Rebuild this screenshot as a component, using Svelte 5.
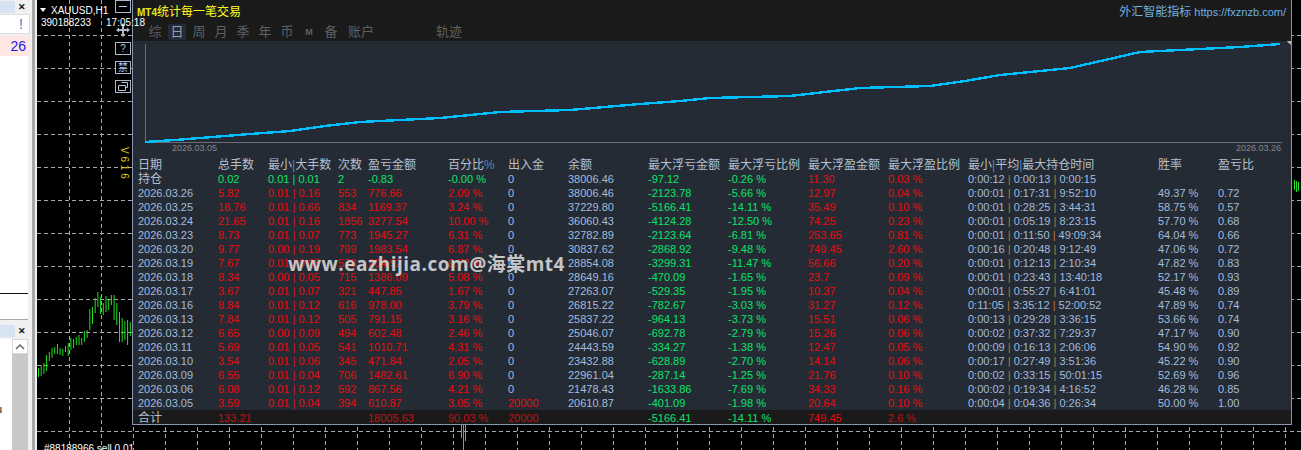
<script>
  const rows = `2026.03.26,5.82,0.01|0.16,553,776.66,2.09 %,0,38006.46,-2123.78,-5.66 %,12.97,0.04 %,0:00:01|0:17:31|9:52:10,49.37 %,0.72
2026.03.25,18.76,0.01|0.66,834,1169.37,3.24 %,0,37229.80,-5166.41,-14.11 %,35.49,0.10 %,0:00:01|0:28:25|3:44:31,58.75 %,0.57
2026.03.24,21.65,0.01|0.16,1856,3277.54,10.00 %,0,36060.43,-4124.28,-12.50 %,74.25,0.23 %,0:00:01|0:05:19|8:23:15,57.70 %,0.68
2026.03.23,8.73,0.01|0.07,773,1945.27,6.31 %,0,32782.89,-2123.64,-6.81 %,253.65,0.81 %,0:00:01|0:11:50|49:09:34,64.04 %,0.66
2026.03.20,9.77,0.00|0.19,799,1983.54,6.87 %,0,30837.62,-2868.92,-9.48 %,749.45,2.60 %,0:00:16|0:20:48|9:12:49,47.06 %,0.72
2026.03.19,7.67,0.01|0.05,573,204.92,0.72 %,0,28854.08,-3299.31,-11.47 %,56.66,0.20 %,0:00:01|0:12:13|2:10:34,47.82 %,0.83
2026.03.18,8.34,0.00|0.05,715,1386.09,5.08 %,0,28649.16,-470.09,-1.65 %,23.7,0.09 %,0:00:01|0:23:43|13:40:18,52.17 %,0.93
2026.03.17,3.67,0.01|0.07,321,447.85,1.67 %,0,27263.07,-529.35,-1.95 %,10.37,0.04 %,0:00:01|0:55:27|6:41:01,45.48 %,0.89
2026.03.16,8.84,0.01|0.12,616,978.00,3.79 %,0,26815.22,-782.67,-3.03 %,31.27,0.12 %,0:11:05|3:35:12|52:00:52,47.89 %,0.74
2026.03.13,7.84,0.01|0.12,505,791.15,3.16 %,0,25837.22,-964.13,-3.73 %,15.51,0.06 %,0:00:13|0:29:28|3:36:15,53.66 %,0.74
2026.03.12,6.65,0.00|0.09,494,602.48,2.46 %,0,25046.07,-692.78,-2.79 %,15.26,0.06 %,0:00:02|0:37:32|7:29:37,47.17 %,0.90
2026.03.11,5.69,0.01|0.05,541,1010.71,4.31 %,0,24443.59,-334.27,-1.38 %,12.47,0.05 %,0:00:09|0:16:13|2:06:06,54.90 %,0.92
2026.03.10,3.54,0.01|0.06,345,471.84,2.05 %,0,23432.88,-628.89,-2.70 %,14.14,0.06 %,0:00:17|0:27:49|3:51:36,45.22 %,0.90
2026.03.09,6.55,0.01|0.04,706,1482.61,6.90 %,0,22961.04,-287.14,-1.25 %,21.76,0.10 %,0:00:02|0:33:15|50:01:15,52.69 %,0.96
2026.03.06,6.08,0.01|0.12,592,867.56,4.21 %,0,21478.43,-1633.86,-7.69 %,34.33,0.16 %,0:00:02|0:19:34|4:16:52,46.28 %,0.85
2026.03.05,3.59,0.01|0.04,394,610.87,3.05 %,20000,20610.87,-401.09,-1.98 %,20.64,0.10 %,0:00:04|0:04:36|0:26:34,50.00 %,1.00`
    .split('\n').map((l) => l.split(','));

  const hold = ['持仓','0.02','0.01|0.01','2','-0.83','-0.00 %','0','38006.46','-97.12','-0.26 %','11.30','0.03 %','0:00:12|0:00:13|0:00:15','',''];
  const total = ['合计','133.21','','','18005.63','90.03 %','20000','','-5166.41','-14.11 %','749.45','2.6 %','','',''];

  // colour class per column for a daily row
  const tone = ['info','red','red','red','red','red','info','info','green','green','red','red','info','info','info'];
  const holdTone = ['head','green','green','green','green','green','info','info','green','green','red','red','info','info','info'];
  const totalTone = ['head','dim','dim','dim','dim','dim','dim','info','green','green','red','dim','info','info','info'];

  const tabs = ['综','日','周','月','季','年','币','M','备','账户','轨迹'];

  const hLines = [35,68,101,134,167,200,233,266,299,332,365,398,431];
  const vLines = Array.from({ length: 39 }, (_, i) => 69 + i * 32);

  const linePts = '145,142 175,140 200,138 250,134 290,131 325,126 360,122 400,120 440,118 470,115 500,112 570,110 640,104 680,101 710,98 790,96 825,92 860,88 930,86 965,81 1000,75 1070,68 1105,60 1140,52 1200,49 1240,47 1280,44';

  const candles = [[368,377],[365,376],[363,374],[355,371],[352,361],[348,358],[347,354],[344,354],[348,355],[349,356],[346,352],[343,356],[338,350],[339,348],[337,345],[335,345],[338,345],[331,342],[330,338],[309,330],[307,324],[298,313],[292,307],[297,314],[303,315],[296,312],[300,310],[295,305],[295,320],[303,325],[312,342],[318,342],[321,340],[320,345],[322,336]];

  const sep = ' | ';
</script>

{#snippet cell(text, cls, pipe)}
  <span class={cls}>
    {#if text.includes('|')}
      {#each text.split('|') as part, i}{#if i > 0}<span class={pipe}>{sep}</span>{/if}{part}{/each}
    {:else}{text}{/if}
  </span>
{/snippet}

<div class="screen">
  <aside class="side">
    <div class="side-inner">
      <div class="tabbar"><span class="tabtitle"></span><span class="close">✕</span></div>
      <div class="alert"><span class="bang">!</span></div>
      <div class="count">26</div>
      <div class="blank"><div class="rule"></div></div>
      <div class="tabbar second"><span class="tabtitle"></span><span class="close">✕</span></div>
      <div class="list">
        <span class="clip">u</span>
        <div class="scroll">
          <div class="up">
            <svg width="14" height="14" viewBox="0 0 14 14"><path d="M3 9 L7 5 L11 9" fill="none" stroke="#666" stroke-width="1.5" /></svg>
          </div>
          <div class="track"></div>
        </div>
      </div>
    </div>
  </aside>

  <svg class="plot" width="1301" height="450" viewBox="0 0 1301 450">
    {#each hLines as y}
      <line x1="37" x2="1301" y1={y + 0.5} y2={y + 0.5} stroke="#a4a8ae" stroke-dasharray="4 3" />
    {/each}
    {#each vLines as x}
      <line x1={x + 0.5} x2={x + 0.5} y1="0" y2="450" stroke="#a4a8ae" stroke-dasharray="4 3" />
    {/each}
    {#each candles as c, i}
      <line x1={38.5 + i * 2.7} x2={38.5 + i * 2.7} y1={c[0]} y2={c[1]} stroke="#22e022" />
    {/each}
    <g stroke="#22e022">
      <line x1="461.5" x2="461.5" y1="425" y2="438" />
      <line x1="465.5" x2="465.5" y1="425" y2="441" />
      <line x1="463.5" x2="463.5" y1="425" y2="450" />
      <line x1="1294.5" x2="1294.5" y1="180" y2="190" />
      <line x1="1296.5" x2="1296.5" y1="181" y2="192" />
      <line x1="1298.5" x2="1298.5" y1="182" y2="191" />
    </g>
  </svg>

  <div class="order">#88188966 sell 0.01</div>
  <div class="version">V 6 1 6</div>

  <div class="tools">
    <button class="tool" aria-label="minimize"><svg width="16" height="13" viewBox="0 0 16 13"><path d="M4 6.5h8" stroke="#b8c8dc" /></svg></button>
    <svg class="move" width="16" height="16" viewBox="0 0 16 16"><path d="M8 1 L10.5 4 H9 V7 H12 V5.5 L15 8 L12 10.5 V9 H9 V12 H10.5 L8 15 L5.5 12 H7 V9 H4 V10.5 L1 8 L4 5.5 V7 H7 V4 H5.5 Z" fill="#aeb8c4" /></svg>
    <button class="tool text">?</button>
    <button class="tool text">禁</button>
    <button class="tool" aria-label="restore"><svg width="16" height="13" viewBox="0 0 16 13"><path d="M6.5 2.5h6v5h-2M3.5 5.5h7v5h-7z" fill="none" stroke="#b8c8dc" /></svg></button>
  </div>

  <section class="panel">
    <header class="head-block">
      <div class="title-row">
        <span class="title"><b>MT4</b>统计每一笔交易</span>
        <span class="brand">外汇智能指标<a href="#top">https://fxznzb.com/</a></span>
      </div>
      <nav class="tabs">
        {#each tabs as t, i}
          <span class="tab" class:active={i === 1} class:m={t === 'M'} class:wide={t.length > 1} class:far={i === 10}>{t}</span>
        {/each}
      </nav>
    </header>

    <svg class="curve" width="1158" height="117" viewBox="133 41 1158 117">
      <path d="M145.5 44V142.5H1282" fill="none" stroke="#6b7078" />
      <polyline points={linePts} fill="none" stroke="#00bfff" stroke-width="2.4" shape-rendering="crispEdges" />
      <text x="172" y="151">2026.03.05</text>
      <text x="1236" y="151">2026.03.26</text>
      <path d="M1291 38v7l-4-3.5z" fill="#b8b8b8" />
    </svg>

    <div class="table">
      <div class="row heading">
        <span>日期</span><span>总手数</span><span>最小<i>|</i>大手数</span><span>次数</span><span>盈亏金额</span><span>百分比<i>%</i></span><span>出入金</span><span>余额</span><span>最大浮亏金额</span><span>最大浮亏比例</span><span>最大浮盈金额</span><span>最大浮盈比例</span><span>最小<i>|</i>平均<i>|</i>最大持仓时间</span><span>胜率</span><span>盈亏比</span>
      </div>
      <div class="row">
        {#each hold as v, i}{@render cell(v, holdTone[i], i === 12 ? 'amber' : '')}{/each}
      </div>
      {#each rows as r}
        <div class="row">
          {#each r as v, i}{@render cell(v, i === 6 && v !== '0' ? 'red' : tone[i], i === 12 ? 'amber' : '')}{/each}
        </div>
      {/each}
      <div class="row foot">
        {#each total as v, i}{@render cell(v, totalTone[i], '')}{/each}
      </div>
    </div>
  </section>

  <div class="chart-labels">
    <div class="symbol"><span class="tri"></span>XAUUSD,H1</div>
    <div class="acct"><span>390188233</span><span>17:05:18</span></div>
  </div>

  <div class="mark">www.eazhijia.com@海棠mt4</div>
</div>

<style>
  :global(body) { margin: 0; background: #000; }
  .screen {
    position: relative;
    width: 1301px;
    height: 450px;
    overflow: hidden;
    background: #000;
    font-family: "Liberation Sans", "Noto Sans CJK SC", sans-serif;
    font-size: 11px;
  }

  /* left dock */
  .side { position: absolute; left: 0; top: 0; width: 37px; height: 450px; background: #f0f0f0; box-sizing: border-box; }
  .side::after { content: ""; position: absolute; left: 32px; top: 0; width: 3px; height: 100%; background: #a8a8a8; }
  .side-inner { display: flex; flex-direction: column; width: 30px; height: 100%; }
  .tabbar { height: 14px; display: flex; align-items: center; flex: none; }
  .tabtitle { width: 15px; height: 12px; background: #d6e4f2; }
  .close { margin-left: 3px; font-size: 9px; font-weight: bold; color: #111; }
  .alert { height: 20px; background: #fff; border: 1px solid #dcdcdc; border-left: 0; box-sizing: border-box; display: flex; justify-content: flex-end; padding-right: 6px; align-items: center; }
  .bang { color: #2d7fd8; font-size: 14px; }
  .count { height: 20px; margin-top: 2px; background: #ffe6e2; color: #1a1ae0; font-size: 14px; display: flex; align-items: center; justify-content: flex-end; padding-right: 4px; }
  .blank { flex: 1; background: #fff; padding-top: 237px; box-sizing: border-box; width: 28px; border-bottom: 1px solid #a8a8a8; }
  .rule { height: 1px; background: #111; }
  .second { height: 19px; background: #f0f0f0; padding-top: 2px; box-sizing: border-box; }
  .list { height: 111px; background: #fff; position: relative; width: 28px; flex: none; display: flex; justify-content: flex-end; }
  .clip { position: absolute; left: -4px; top: 64px; color: #112; font-size: 11px; }
  .scroll { width: 16px; display: flex; flex-direction: column; }
  .up { height: 15px; display: flex; justify-content: center; align-items: center; background: #fff; border: 1px solid #d8d8d8; box-sizing: border-box; }
  .track { flex: 1; background: #c8c8c8; }

  /* chart canvas */
  .plot { position: absolute; left: 0; top: 0; clip-path: inset(0 0 0 37px); }
  .chart-labels { position: absolute; left: 40px; top: 2px; color: #fff; font-size: 10px; }
  .symbol { display: flex; align-items: center; gap: 5px; height: 14px; padding-top: 1px; box-sizing: content-box; }
  .tri { width: 0; height: 0; border-left: 3.5px solid transparent; border-right: 3.5px solid transparent; border-top: 4px solid #fff; }
  .acct { display: flex; gap: 15px; padding-left: 1px; }
  .order { position: absolute; left: 44px; top: 443px; color: #fff; font-size: 10px; }
  .version { position: absolute; left: 119px; top: 147px; color: #d8c818; font-size: 10px; writing-mode: vertical-rl; }

  .tools { position: absolute; left: 115px; top: 0; width: 16px; display: flex; flex-direction: column; align-items: center; }
  .tool { width: 16px; height: 13px; padding: 0; margin: 0 0 6px; box-sizing: border-box; background: #000; border: 1px solid #aab8cc; color: #b8c8dc; font: 10px/11px "Liberation Sans", "Noto Sans CJK SC", sans-serif; display: flex; align-items: center; justify-content: center; overflow: hidden; }
  .tool svg { flex: none; }
  .move { margin: 3px 0 4px; }

  /* stats window */
  .panel { position: absolute; left: 132px; top: 0; width: 1160px; height: 425px; box-sizing: border-box; border: 1px solid #8796ae; border-top: 0; background: #252b35; display: flex; flex-direction: column; }
  .head-block { height: 41px; background: #1a1a1a; flex: none; box-sizing: border-box; padding-top: 1px; }
  .title-row { display: flex; justify-content: space-between; height: 18px; align-items: center; padding: 0 5px 0 4px; }
  .title { color: #ffff22; font-size: 12px; }
  .title b { color: #e8e818; font-weight: bold; font-size: 10px; }
  .brand { color: #6fb2e0; font-size: 12px; }
  .brand a { color: #6fb2e0; font-size: 11px; margin-left: 3px; text-decoration: none; }
  .tabs { display: flex; margin-top: 4px; padding-left: 11px; height: 17px; align-items: center; color: #5e6064; font-size: 13px; }
  .tab { width: 18px; margin: 0 2px; height: 16px; line-height: 16px; text-align: center; flex: none; box-sizing: border-box; }
  .tab.active { background: #252b35; border-radius: 2px; color: #96a2b4; }
  .tab.m { font-size: 9px; font-weight: bold; }
  .tab.wide { width: 28px; margin-left: 5px; }
  .tab.far { margin-left: 58px; }

  .curve { display: block; flex: none; }
  .curve text { font: 9px "Liberation Sans", sans-serif; fill: #84888f; }

  .table { display: flex; flex-direction: column; flex: 1; }
  .row {
    display: grid;
    grid-template-columns: 80px 50px 70px 30px 80px 60px 60px 80px 80px 80px 80px 80px 190px 60px 1fr;
    height: 14px;
    line-height: 14px;
    padding-left: 5px;
    white-space: pre;
    flex: none;
  }
  .row > span { overflow: visible; }
  .heading { color: #b6c0cc; font-size: 12px; }
  .heading i { font-style: normal; color: #4a86c8; }
  .head { color: #b6c0cc; font-size: 12px; }
  .info { color: #a2bcdc; }
  .red { color: #e80c0c; }
  .green { color: #08e468; }
  .dim { color: #c41010; }
  .amber { color: #b87a38; }
  .foot { background: #1a1a1a; height: 14px; line-height: 16px; }

  .mark { position: absolute; left: 288px; top: 249px; color: rgba(226, 226, 226, 0.85); font: bold 19px "Open Sans", "Noto Sans CJK SC", sans-serif; letter-spacing: 0.5px; white-space: nowrap; }
</style>
